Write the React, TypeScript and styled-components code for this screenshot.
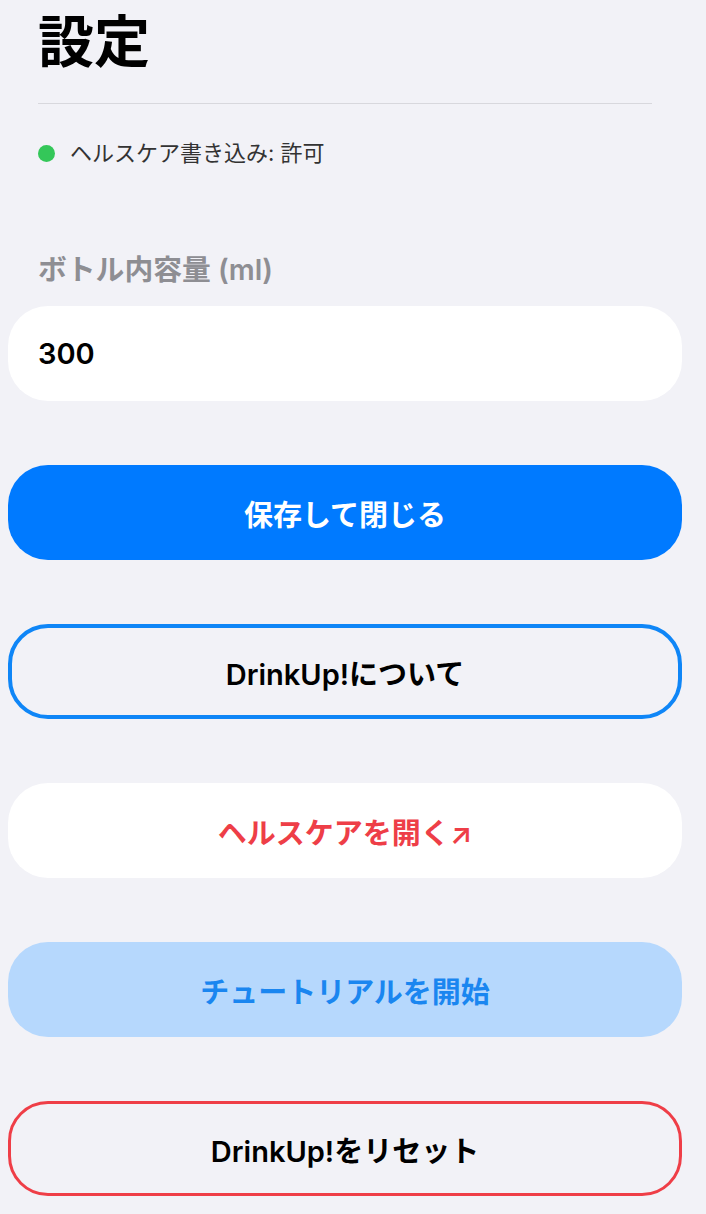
import styled, { createGlobalStyle, css } from "styled-components"

const GlobalStyle = createGlobalStyle`
    html, body {
        margin: 0;
        padding: 0;
        background: #f2f2f7;
    }
    body {
        font-family: Inter, "Noto Sans CJK JP", sans-serif;
        color: #000;
    }
`

const Page = styled.div`
    padding: 9px 24px 20px 8px;
`

const Header = styled.div`
    padding: 0 30px;
`

const Title = styled.h1`
    margin: 0;
    font-size: 56px;
    line-height: 67px;
    font-weight: 700;
`

const Divider = styled.hr`
    margin: 27px 0 0;
    border: none;
    height: 1px;
    background: #d8d8dd;
`

const StatusRow = styled.div`
    display: flex;
    align-items: center;
    gap: 15px;
    margin-top: 37px;
    font-size: 22px;
    line-height: 24px;
    color: #333;
`

const Dot = styled.span<{ $color: string }>`
    width: 17px;
    height: 17px;
    border-radius: 50%;
    background: ${(p) => p.$color};
`

const FieldLabel = styled.div`
    margin-top: 89px;
    font-size: 28.8px;
    line-height: 32px;
    font-weight: 600;
    color: #8e8e93;
`

const Stack = styled.div`
    display: flex;
    flex-direction: column;
    gap: 64px;
    margin-top: 20px;
`

const Input = styled.input`
    box-sizing: border-box;
    width: 100%;
    height: 95px;
    border: none;
    border-radius: 40px;
    background: #fff;
    padding: 0 30px;
    font-family: Inter, "Noto Sans CJK JP", sans-serif;
    font-size: 29px;
    font-weight: 600;
    color: #000;
    outline: none;
`

type Variant = "primary" | "outlineBlue" | "plain" | "tinted" | "outlineRed"

const variants = {
    primary: css`
        background: #007aff;
        color: #fff;
    `,
    outlineBlue: css`
        background: transparent;
        border: 4px solid #0f86f7;
        color: #000;
    `,
    plain: css`
        background: #fff;
        color: #ee3e47;
    `,
    tinted: css`
        background: #b6d8fd;
        color: #1a86f0;
    `,
    outlineRed: css`
        background: transparent;
        border: 3px solid #ef3e47;
        color: #000;
    `,
}

const Button = styled.button<{ $variant: Variant }>`
    box-sizing: border-box;
    width: 100%;
    height: 95px;
    border: none;
    border-radius: 40px;
    font-family: Inter, "Noto Sans CJK JP", sans-serif;
    font-size: 29px;
    font-weight: 600;
    display: flex;
    align-items: center;
    justify-content: center;
    cursor: pointer;
    ${(p) => variants[p.$variant]}
`

const App = () => {
    return (
        <>
            <GlobalStyle />
            <Page>
                <Header>
                    <Title>設定</Title>
                    <Divider />
                    <StatusRow>
                        <Dot $color="#34c759" />
                        <span>ヘルスケア書き込み: 許可</span>
                    </StatusRow>
                    <FieldLabel>ボトル内容量 (ml)</FieldLabel>
                </Header>
                <Stack>
                    <Input defaultValue="300" inputMode="numeric" />
                    <Button $variant="primary">保存して閉じる</Button>
                    <Button $variant="outlineBlue">DrinkUp!について</Button>
                    <Button $variant="plain">ヘルスケアを開く↗</Button>
                    <Button $variant="tinted">チュートリアルを開始</Button>
                    <Button $variant="outlineRed">DrinkUp!をリセット</Button>
                </Stack>
            </Page>
        </>
    )
}

export default App
